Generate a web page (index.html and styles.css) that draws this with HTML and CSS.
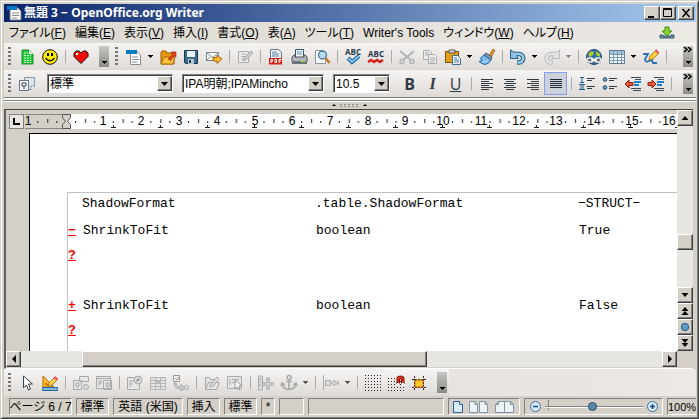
FILE: index.html
```html
<!DOCTYPE html>
<html lang="ja">
<head>
<meta charset="utf-8">
<title>無題 3 - OpenOffice.org Writer</title>
<link rel="stylesheet" href="styles.css">
</head>
<body>
<svg class="defs" aria-hidden="true">
  <defs>
    <symbol id="down" viewBox="0 0 5 3"><path d="M0 0h5v1H4v1H3v1H2V2H1V1H0z"/></symbol>
    <symbol id="chev" viewBox="0 0 10 6"><path d="M1 0l3 2.500L1 5M5 0l3 2.500L5 5" fill="none" stroke="#000" stroke-width="1.500"/></symbol>
    <pattern id="ticks" x="66" width="37.700" height="15" patternUnits="userSpaceOnUse"><path d="M9 7h1v2H9zM19 5h1v4h-1zM28 7h1v2h-1z" fill="#222"/></pattern>
    <pattern id="tabs" x="90" width="47" height="15" patternUnits="userSpaceOnUse"><path d="M21 13.500h5M23.500 11v3" stroke="#222"/></pattern>
    <pattern id="dots" width="3" height="3" patternUnits="userSpaceOnUse"><rect width="1" height="1" fill="#24262c"/></pattern>
  </defs>
</svg>
<div class="window">
  <header class="title">
    <svg class="i" viewBox="0 0 16 16"><path d="M4 3h8l3 3v9H4z" fill="#fff" stroke="#777"/><path d="M1 1h10v4H1z" fill="#0879c1"/><path d="M6 8h7M6 10.500h7M6 13h5" stroke="#888"/></svg>
    <h1>無題 3 − OpenOffice.org Writer</h1>
    <div class="winbtns">
      <button class="raised" aria-label="最小化"><svg viewBox="0 0 12 10"><path d="M2 8h6v2H2z"/></svg></button>
      <button class="raised" aria-label="最大化"><svg viewBox="0 0 12 10"><path d="M1.500.5h8v8h-8zM1 1.500h9" fill="none" stroke="#000"/></svg></button>
      <button class="raised close" aria-label="閉じる"><svg viewBox="0 0 12 10"><path d="M2.500 1l7 8M9.500 1l-7 8" stroke="#000" stroke-width="1.600"/></svg></button>
    </div>
  </header>

  <nav class="menu">
    <a href="#">ファイル(<u>F</u>)</a><a href="#">編集(<u>E</u>)</a><a href="#">表示(<u>V</u>)</a><a href="#">挿入(<u>I</u>)</a><a href="#">書式(<u>O</u>)</a><a href="#">表(<u>A</u>)</a><a href="#">ツール(<u>T</u>)</a><a href="#">Writer's Tools</a><a href="#">ウィンドウ(<u>W</u>)</a><a href="#">ヘルプ(<u>H</u>)</a>
    <button class="update" aria-label="更新"><svg class="i" viewBox="0 0 16 16"><path d="M1 10v3h14v-3h-3v1H4v-1z" fill="#6c8a9c" stroke="#385d74"/><path d="M6 2h4v4h3l-5 5-5-5h3z" fill="#8bd52c" stroke="#3c8a10"/></svg></button>
  </nav>

  <div class="toolbar" role="toolbar" aria-label="標準">
    <span class="grip"></span>
    <button aria-label="表計算"><svg class="i" viewBox="0 0 16 16"><path d="M3 1h7l4 4v10H3z" fill="#25c93d" stroke="#168c27"/><path d="M5 4h4M5 6.500h7M5 9h7M5 11.500h7M5 13.500h7" stroke="#d8ffdc" stroke-dasharray="2 1"/><path d="M10 1v4h4z" fill="#fff"/></svg></button>
    <button aria-label="スマイル"><svg class="i" viewBox="0 0 16 16"><circle cx="8" cy="8" r="7.300" fill="#ffef00" stroke="#111"/><path d="M5 4h2v3H5zM9 4h2v3H9z"/><path d="M3.500 9q4.500 5.500 9 0" fill="none" stroke="#111" stroke-width="1.300"/></svg></button>
    <i class="sep"></i>
    <button aria-label="お気に入り"><svg class="i" viewBox="0 0 16 16"><path d="M8 14.500L1 7.500V4l2-2h3l2 2 2-2h3l2 2v3.500z" fill="#f50a0a" stroke="#111"/><path d="M3 4h2v2H3z" fill="#fff"/></svg></button>
    <button class="more" aria-label="その他"><svg class="arr"><use href="#down"/></svg></button>
    <span class="grip"></span>
    <button aria-label="新規"><svg class="i" viewBox="0 0 16 16"><path d="M4.500 3h7l3 3v9.500h-10z" fill="#fff" stroke="#8a8a8a"/><path d="M0 1h11v4H0z" fill="#0879c1"/><path d="M6 8h6M6 10.500h7M6 13h5" stroke="#888"/></svg></button>
    <button class="drop" aria-label="新規メニュー"><svg class="arr"><use href="#down"/></svg></button>
    <button aria-label="開く"><svg class="i" viewBox="0 0 16 16"><path d="M1 15V4l1-2h4l1 2h7v11z" fill="#e8960c" stroke="#9a5b06"/><path d="M1 15l3-7h11l-2 7z" fill="#ffc53a" stroke="#a9690b"/><path d="M8 10l5-5-2-2h5v5l-1.500-1.500-4 5z" fill="#e64520" stroke="#8c1c0a" stroke-width=".6"/></svg></button>
    <button aria-label="保存"><svg class="i" viewBox="0 0 16 16"><path d="M1.500 1.500h13v13h-12l-1-1z" fill="#3c6a8a" stroke="#173a55"/><path d="M4 2h8v6H4z" fill="#e9f2fa"/><path d="M5 10h6v5H5z" fill="#b4c8d8"/><path d="M6 11h2v3H6z" fill="#234"/></svg></button>
    <button aria-label="メール"><svg class="i" viewBox="0 0 16 16"><path d="M.5 3.500h12v8H.5z" fill="#f4f6f8" stroke="#7c8a96"/><path d="M.5 3.500l6 5 6-5M.5 11.500l4-4M12.500 11.500l-4-4" fill="none" stroke="#8c9aa6"/><path d="M7 8.500h4V6l5 4-5 4.500V12H7z" fill="#fb3" stroke="#a86408"/></svg></button>
    <i class="sep"></i>
    <button class="off" disabled aria-label="編集"><svg class="i" viewBox="0 0 16 16"><path d="M1.500 2.500h10v11h-10zM4 5h5M4 7.500h5M4 10h2" fill="#eee" stroke="#aaa"/><path d="M6 12l1-3 7-7 2 2-7 7z" fill="#ccc" stroke="#aaa"/></svg></button>
    <i class="sep"></i>
    <button aria-label="PDF"><svg class="i" viewBox="0 0 16 16"><path d="M2.500.5h8l3 3v11h-11z" fill="#f2f5f8" stroke="#678"/><path d="M4 3h5M4 5h7M4 7h7" stroke="#58a"/><path d="M1 9h13v6.500H1z" fill="#d81f14"/><path d="M3 14v-3.500h1.500v2H3M7 10.500v3h1.500v-3zM11 14v-3.500h2.500M11 12h2" fill="none" stroke="#fff"/></svg></button>
    <button aria-label="印刷"><svg class="i" viewBox="0 0 16 16"><path d="M4.500.5h8v8h-8z" fill="#eef4fa" stroke="#357"/><path d="M6 3h5M6 5h5" stroke="#69a"/><path d="M1 8l2-2h1v2h9V6h1l2 2v5H1z" fill="#b3b9bf" stroke="#555"/><path d="M1 12h15v3H1z" fill="#6c7278"/><path d="M10 12h4v1h-4z" fill="#8e2"/></svg></button>
    <button aria-label="プレビュー"><svg class="i" viewBox="0 0 16 16"><path d="M1.500 1.500h7l3 3v10h-10z" fill="#f8f8f8" stroke="#8a949c"/><circle cx="8.500" cy="6" r="4" fill="#b7dbf5" stroke="#4c7692" stroke-width="1.300"/><path d="M11.500 9l4 5" stroke="#c47a28" stroke-width="2.500"/></svg></button>
    <i class="sep"></i>
    <button aria-label="スペルチェック"><svg class="i" viewBox="0 0 16 16"><text x="8" y="6" class="abc">ABC</text><path d="M3 9l4 4 7-6" fill="none" stroke="#1a5a98" stroke-width="4"/><path d="M3 9l4 4 7-6" fill="none" stroke="#7fc8f5" stroke-width="2"/></svg></button>
    <button aria-label="自動スペルチェック"><svg class="i" viewBox="0 0 16 16"><text x="8" y="8" class="abc">ABC</text><path d="M0 13l3-2 3 2 3-2 3 2 3-2" fill="none" stroke="#d3211a" stroke-width="2.500"/></svg></button>
    <i class="sep"></i>
    <button class="off" disabled aria-label="切り取り"><svg class="i" viewBox="0 0 16 16"><path d="M1 2l11 9M15 2L4 11" stroke="#b4b4b4" stroke-width="2"/><circle cx="3" cy="12.500" r="2" fill="none" stroke="#b4b4b4" stroke-width="1.500"/><circle cx="13" cy="12.500" r="2" fill="none" stroke="#b4b4b4" stroke-width="1.500"/></svg></button>
    <button class="off" disabled aria-label="コピー"><svg class="i" viewBox="0 0 16 16"><path d="M1.500 1.500h6l2 2v7h-8zM3 4h4M3 6h4" fill="#eee" stroke="#aaa"/><path d="M6.500 5.500h6l2 2v7h-8zM8 9h5M8 11h5M8 13h4" fill="#eee" stroke="#aaa"/></svg></button>
    <button aria-label="貼り付け"><svg class="i" viewBox="0 0 16 16"><path d="M.5 2.500h13v11H.5z" fill="#e3a01c" stroke="#7b4d0a"/><path d="M4 1h6v3H4z" fill="#d8d8c8" stroke="#555"/><path d="M7.500 6.500h5l3 3v6h-8z" fill="#f0f5fa" stroke="#456d8c"/><path d="M9 9h3M9 11h5M9 13h5" stroke="#4a82ac"/></svg></button>
    <button class="drop" aria-label="貼り付けメニュー"><svg class="arr"><use href="#down"/></svg></button>
    <button aria-label="書式のコピー"><svg class="i" viewBox="0 0 16 16"><path d="M10.500 6l3.500-6 2 1.500-3.500 6z" fill="#e89a28" stroke="#935408" stroke-width=".7"/><path d="M7 4l6 4-1 3-7-5z" fill="#8b9aa6" stroke="#456"/><path d="M5 6l7 5q-2 4-6 4.500-3-.5-6-3l3.500-1-2.500-2z" fill="#79b8ec" stroke="#2669a8"/><path d="M5 11l-1 3M8 11l-1 3" stroke="#d5edff"/></svg></button>
    <i class="sep"></i>
    <button aria-label="元に戻す"><svg class="i" viewBox="0 0 16 16"><path d="M4 5h5a4.200 4.200 0 010 8.500H7" fill="none" stroke="#245b82" stroke-width="4.500"/><path d="M.5 1v8.500h8L6.500 7V3.500L3.500 3z" fill="#8fc0df" stroke="#245b82"/><path d="M4 5h5a4.200 4.200 0 010 8.500H7.500" fill="none" stroke="#9bcbe8" stroke-width="2.500"/></svg></button>
    <button class="drop" aria-label="元に戻すメニュー"><svg class="arr"><use href="#down"/></svg></button>
    <button class="off" disabled aria-label="やり直し"><svg class="i" viewBox="0 0 16 16"><path d="M12 5H7a4.200 4.200 0 000 8.500h2" fill="none" stroke="#b8b8b8" stroke-width="4.500"/><path d="M15.500 1v8.500h-8L9.500 7V3.500l3-.5z" fill="#e4e2e0" stroke="#b8b8b8"/><path d="M12 5H7a4.200 4.200 0 000 8.500h1.500" fill="none" stroke="#e6e4e2" stroke-width="2.500"/></svg></button>
    <button class="drop off" disabled aria-label="やり直しメニュー"><svg class="arr"><use href="#down"/></svg></button>
    <i class="sep"></i>
    <button aria-label="ハイパーリンク"><svg class="i" viewBox="0 0 16 16"><circle cx="8" cy="8" r="7.500" fill="#2f6aa0" stroke="#234b70"/><path d="M2 5l3-3 3 1-1 3-3 2zM10 2l4 3v3l-4-2z" fill="#a9ce32"/><path d="M1 9h14v5H1z" fill="#607078"/><rect x="1" y="9" width="6" height="4" rx="2" fill="none" stroke="#eee" stroke-width="1.500"/><rect x="9" y="9" width="6" height="4" rx="2" fill="none" stroke="#eee" stroke-width="1.500"/><path d="M5 11h6" stroke="#fff" stroke-width="1.500"/></svg></button>
    <button aria-label="表"><svg class="i" viewBox="0 0 16 16"><path d="M.5 1.500h15v13H.5z" fill="#f4f9fd" stroke="#5d7c96"/><path d="M1 2h14v3H1z" fill="#a7c5dc"/><path d="M.5 5.500h15M.5 8.500h15M.5 11.500h15M4.500 2v12M8.500 2v12M12.500 2v12" stroke="#7c98ae"/></svg></button>
    <button class="drop" aria-label="表メニュー"><svg class="arr"><use href="#down"/></svg></button>
    <button aria-label="図形描画"><svg class="i" viewBox="0 0 16 16"><path d="M0 5h5l-3 5q0 4 4 2l3-1 1 3h4" fill="none" stroke="#2b6fb8" stroke-width="1.800"/><path d="M6 11l1-4 6-6 3 3-6 6z" fill="#ffcf42" stroke="#9b680c" stroke-width=".8"/><path d="M12 2l1-2 3 3-1 2z" fill="#e5526c"/></svg></button>
    <i class="sep"></i>
    <button class="more last" aria-label="その他"><svg class="chev"><use href="#chev"/></svg><svg class="arr"><use href="#down"/></svg></button>
  </div>

  <div class="toolbar" role="toolbar" aria-label="書式設定">
    <span class="grip"></span>
    <button aria-label="スタイル"><svg class="i" viewBox="0 0 16 16"><path d="M5.500 1.500h10v9l-3 3h-7z" fill="#dfe7ee" stroke="#8496a6"/><path d="M12 14v-4h4" fill="#fff" stroke="#8496a6"/><path d="M.5 4.500h9v10h-9z" fill="#f2f4f6" stroke="#667686"/><path d="M3 7h4v3H3zM5 10v3" fill="none" stroke="#445"/></svg></button>
    <label class="combo style"><select aria-label="段落スタイル"><option>標準</option></select><span class="raised"><svg viewBox="0 0 7 4"><path d="M0 0h7L3.500 4z"/></svg></span></label>
    <label class="combo font"><select aria-label="フォント名"><option>IPA明朝;IPAMincho</option></select><span class="raised"><svg viewBox="0 0 7 4"><path d="M0 0h7L3.500 4z"/></svg></span></label>
    <label class="combo size"><select aria-label="フォントサイズ"><option>10.5</option></select><span class="raised"><svg viewBox="0 0 7 4"><path d="M0 0h7L3.500 4z"/></svg></span></label>
    <button class="b" aria-label="太字">B</button>
    <button class="b it" aria-label="斜体">I</button>
    <button class="b un" aria-label="下線">U</button>
    <i class="sep"></i>
    <button aria-label="左揃え"><svg class="i" viewBox="0 0 16 16"><path d="M2 3.500h12M2 5.500h8M2 7.500h12M2 9.500h8M2 11.500h12M2 13.500h8" stroke="#333b45"/></svg></button>
    <button aria-label="中央揃え"><svg class="i" viewBox="0 0 16 16"><path d="M2 3.500h12M4 5.500h8M2 7.500h12M4 9.500h8M2 11.500h12M4 13.500h8" stroke="#333b45"/></svg></button>
    <button aria-label="右揃え"><svg class="i" viewBox="0 0 16 16"><path d="M2 3.500h12M6 5.500h8M2 7.500h12M6 9.500h8M2 11.500h12M6 13.500h8" stroke="#333b45"/></svg></button>
    <button class="on" aria-pressed="true" aria-label="両端揃え"><svg class="i" viewBox="0 0 16 16"><path d="M2 3.500h12M2 5.500h12M2 7.500h12M2 9.500h12M2 11.500h12" stroke="#222a35"/></svg></button>
    <i class="sep"></i>
    <button aria-label="番号付け"><svg class="i" viewBox="0 0 16 16"><path d="M1 1.500h4M3 2v4M1 6.500h4M0 8.500h6M2 9v4M4 9v4M0 13.500h6" stroke="#1c6390"/><path d="M8 2.500h8M8 4.500h5M8 10.500h8M8 12.500h5" stroke="#333b45"/></svg></button>
    <button aria-label="箇条書き"><svg class="i" viewBox="0 0 16 16"><circle cx="3" cy="3.500" r="1.800" fill="#6ba8d0" stroke="#134468"/><circle cx="3" cy="11.500" r="1.800" fill="#6ba8d0" stroke="#134468"/><path d="M7 2.500h8M7 4.500h5M7 10.500h8M7 12.500h5" stroke="#333b45"/></svg></button>
    <button aria-label="インデント減"><svg class="i" viewBox="0 0 16 16"><path d="M6 1.500h10M10 3.500h6M6 12.500h10M8 14.500h8" stroke="#3b4650"/><path d="M9 5h7v2H9zM9 8h5v2H9z" fill="#1487cc"/><path d="M0 8l4-4v2.500h4v3H4V12z" fill="#ea593c" stroke="#8e210e"/></svg></button>
    <button aria-label="インデント増"><svg class="i" viewBox="0 0 16 16"><path d="M6 1.500h10M10 3.500h6M6 12.500h10M8 14.500h8" stroke="#3b4650"/><path d="M9 5h7v2H9zM9 8h5v2H9z" fill="#1487cc"/><path d="M8 8L4 4v2.500H0v3h4V12z" fill="#ea593c" stroke="#8e210e"/></svg></button>
    <i class="sep"></i>
    <button class="more last" aria-label="その他"><svg class="chev"><use href="#chev"/></svg><svg class="arr"><use href="#down"/></svg></button>
  </div>

  <div class="splitter"><svg viewBox="0 0 36 4"><path d="M0 3h4L2 1zM31 3h4l-2-2z"/><path d="M8 1.500h20M8 3.500h20" stroke="#888" stroke-dasharray="2 2"/></svg></div>

  <main class="work">
    <div class="ruler">
      <button class="tabkind" aria-label="タブの種類"><svg viewBox="0 0 8 8"><path d="M0 0h2v5h5v2H0z"/></svg></button>
      <svg class="scale" height="15">
        <g class="shift">
          <rect x="66" width="2000" height="15" fill="#fff"/>
          <path d="M25 .5h41M25 14.500h41" stroke="#888"/>
          <rect x="36" width="28" height="15" fill="url(#ticks)"/>
          <rect x="66" width="2000" height="15" fill="url(#ticks)"/>
          <rect x="90" width="2000" height="15" fill="url(#tabs)"/>
          <g class="nums">
            <text x="28" y="11">1</text><text x="103" y="11">1</text><text x="141" y="11">2</text><text x="179" y="11">3</text><text x="217" y="11">4</text><text x="255" y="11">5</text><text x="292" y="11">6</text><text x="330" y="11">7</text><text x="368" y="11">8</text><text x="405" y="11">9</text><text x="443" y="11">10</text><text x="481" y="11">11</text><text x="519" y="11">12</text><text x="556" y="11">13</text><text x="594" y="11">14</text><text x="632" y="11">15</text><text x="669" y="11">16</text>
          </g>
          <path d="M62.500.5h8v3l-3 4 3 3v4h-8v-4l3-3-3-4z" fill="#d4d0c8" stroke="#555"/>
        </g>
      </svg>
    </div>
    <div class="canvas">
      <article class="page">
        <div class="sheet">
        <table>
          <colgroup><col class="c0"><col class="c1"><col class="c2"><col></colgroup>
          <tbody>
            <tr class="head"><td></td><td>ShadowFormat</td><td>.table.ShadowFormat</td><td>−STRUCT−</td></tr>
            <tr><td><a href="#">−</a></td><td>ShrinkToFit</td><td>boolean</td><td>True</td></tr>
            <tr><td><a href="#">?</a></td><td></td><td></td><td></td></tr>
            <tr><td></td><td></td><td></td><td></td></tr>
            <tr><td><a href="#">+</a></td><td>ShrinkToFit</td><td>boolean</td><td>False</td></tr>
            <tr><td><a href="#">?</a></td><td></td><td></td><td></td></tr>
          </tbody>
        </table>
        </div>
      </article>
    </div>
    <div class="vscroll">
      <button class="raised" aria-label="上へ"><svg viewBox="0 0 8 8"><path d="M.5 6h7L4 2z"/></svg></button>
      <span class="above"></span><span class="raised thumb"></span><span class="below"></span>
      <button class="raised" aria-label="下へ"><svg viewBox="0 0 8 8"><path d="M.5 2h7L4 6z"/></svg></button>
      <button class="raised" aria-label="前のページ"><svg viewBox="0 0 8 8"><path d="M.5 4h7L4 0zM.5 8h7L4 4z"/></svg></button>
      <button class="raised" aria-label="ナビゲーション"><svg viewBox="0 0 8 8"><circle cx="4" cy="4" r="3.700" fill="#5a9acb" stroke="#315a7c"/></svg></button>
      <button class="raised" aria-label="次のページ"><svg viewBox="0 0 8 8"><path d="M.5 0h7L4 4zM.5 4h7L4 8z"/></svg></button>
    </div>
    <div class="hscroll">
      <button class="raised" aria-label="左へ"><svg viewBox="0 0 8 8"><path d="M6 0v8L2 4z"/></svg></button>
      <span class="before"></span><span class="raised thumb"></span><span class="after"></span>
      <button class="raised" aria-label="右へ"><svg viewBox="0 0 8 8"><path d="M2 0v8l4-4z"/></svg></button>
    </div>
    <span class="corner"></span>
  </main>

  <div class="toolbar forms" role="toolbar" aria-label="フォームデザイン">
    <span class="grip"></span>
    <button aria-label="選択"><svg class="i" viewBox="0 0 16 16"><path d="M4.500 1v12l3-3 2 5 2-1-2-5h4z" fill="#fff" stroke="#344452"/></svg></button>
    <button aria-label="デザインモード"><svg class="i" viewBox="0 0 16 16"><path d="M1 1l11 11H1zM4 8v2h2z" fill="#ffbd23" stroke="#b96a08" fill-rule="evenodd"/><path d="M.5 12.500h15v3H.5z" fill="#7db9e8" stroke="#2c6696"/><path d="M6 11l1-3 6-6 3 2-7 7z" fill="#ffcf42" stroke="#8e5b10" stroke-width=".7"/><path d="M11 3l2-2 3 3-2 1z" fill="#e85a68"/></svg></button>
    <i class="sep"></i>
    <button class="off" disabled aria-label="コントロール"><svg class="i" viewBox="0 0 16 16"><path d="M6.500 1.500h9v5h-9zM.5 5.500h8v9h-8zM3 8h3v3H3zM4.500 11v2" fill="#e6e6e6" stroke="#aaa"/><circle cx="13" cy="12" r="2.500" fill="#ddd" stroke="#aaa"/></svg></button>
    <button class="off" disabled aria-label="フォーム"><svg class="i" viewBox="0 0 16 16"><path d="M.5 1.500h14v12H.5zM1 3.500h13M3 6h3M3 6v5M3 8h3M7.500 5.500h8v9h-8zM10 8h3v3h-3zM11.500 11v2" fill="#e6e6e6" stroke="#aaa"/></svg></button>
    <i class="sep"></i>
    <button class="off" disabled aria-label="フォームナビゲータ"><svg class="i" viewBox="0 0 16 16"><path d="M.5 2.500h12v12H.5zM3 6h4M3 6v6M3 9h3" fill="#e6e6e6" stroke="#aaa"/><circle cx="11" cy="5" r="4" fill="#ddd" stroke="#aaa"/><path d="M13 3l-3 1-1 3 3-1z" fill="#999"/></svg></button>
    <button class="off" disabled aria-label="テーブル"><svg class="i" viewBox="0 0 16 16"><path d="M.5 2.500h15v12H.5zM.5 5.500h15M.5 8.500h15M.5 11.500h15M5.500 3v11M10.500 3v11" fill="#e6e6e6" stroke="#b4b4b4"/><path d="M6 6h5v2H6z" fill="#bbb"/></svg></button>
    <button class="off" disabled aria-label="タブ順序"><svg class="i" viewBox="0 0 16 16"><path d="M.5.5h6v6h-6zM2 3l2 2 3-4" fill="#eee" stroke="#999"/><path d="M3 8q0 4 5 4v-3l4 4-4 3v-2Q1 14 1 8z" fill="#ccc" stroke="#aaa"/><circle cx="13.500" cy="12.500" r="2" fill="#ddd" stroke="#aaa"/></svg></button>
    <i class="sep"></i>
    <button class="off" disabled aria-label="デザインで開く"><svg class="i" viewBox="0 0 16 16"><path d="M1.500 14.500v-12h4l1 2h6v3M1.500 14.500l3-7h11l-3 7z" fill="#e2e2e2" stroke="#aaa"/><path d="M6 12l1-3 6-7 2 2-6 7z" fill="#ddd" stroke="#aaa"/></svg></button>
    <button class="off" disabled aria-label="自動フォーカス"><svg class="i" viewBox="0 0 16 16"><path d="M.5 1.500h14v12H.5zM3 4v6M5 4.500h7M5 7.500h3" fill="#e6e6e6" stroke="#aaa"/><path d="M8 5v9l2-2 2 3 1-1-1-3h3z" fill="#f4f4f4" stroke="#999"/></svg></button>
    <i class="sep"></i>
    <button class="off" disabled aria-label="位置とサイズ"><svg class="i" viewBox="0 0 16 16"><path d="M.5 1v14h4V1zM1 4h2M1 7h2M1 10h2" fill="#ddd" stroke="#aaa"/><path d="M10 2l2 2.500h-1V8h3V7l2 2-2 2v-1h-3v3h1l-2 2-2-2h1v-3H6v1L4 9l2-2v1h3V4.500H8z" fill="#ddd" stroke="#999" stroke-width=".8"/></svg></button>
    <button class="off" disabled aria-label="アンカー"><svg class="i" viewBox="0 0 16 16"><circle cx="8" cy="2.500" r="2" fill="none" stroke="#aaa" stroke-width="1.500"/><path d="M8 4v11M5 6.500h6M1 9q1 5 7 5.500 6-.5 7-5.500M0 11l1-3 3 2M16 11l-1-3-3 2" fill="none" stroke="#aaa" stroke-width="1.600"/></svg></button>
    <button class="drop off dark" disabled aria-label="アンカーメニュー"><svg class="arr"><use href="#down"/></svg></button>
    <i class="sep"></i>
    <button class="off" disabled aria-label="配置"><svg class="i" viewBox="0 0 16 16"><path d="M.5 0v15M2.500 5.500h5v5h-5z" fill="#ddd" stroke="#aaa"/><path d="M8.500 8l3-3v2h4v2h-4v2z" fill="#ddd" stroke="#aaa"/></svg></button>
    <button class="drop off dark" disabled aria-label="配置メニュー"><svg class="arr"><use href="#down"/></svg></button>
    <i class="sep"></i>
    <button aria-label="グリッド表示"><svg class="i" viewBox="0 0 16 16"><rect width="16" height="16" fill="url(#dots)"/></svg></button>
    <button aria-label="グリッドに吸着"><svg class="i" viewBox="0 0 16 16"><rect y="3" width="16" height="13" fill="url(#dots)"/><path d="M9 9V3q0-2 3.500-2T16 3v6h-2.500V4h-2v5z" fill="#e7301c" stroke="#791208"/><path d="M9 8h2.500v2H9zM13.500 8H16v2h-2.500z" fill="#fff"/></svg></button>
    <button aria-label="ガイド"><svg class="i" viewBox="0 0 16 16"><path d="M1 4.500h14M1 12.500h14M3.500 1v15M12.500 1v15" stroke="#222" stroke-dasharray="2 1"/><path d="M4 5h8v7H4z" fill="#ffc928" stroke="#c15b0c"/></svg></button>
    <button class="more" aria-label="その他"><svg class="arr"><use href="#down"/></svg></button>
  </div>

  <footer class="status">
    <span class="s-page">ページ 6 / 7</span><span class="s-w">標準</span><span class="s-lang">英語 (米国)</span><span class="s-w">挿入</span><span class="s-w">標準</span><span class="s-mod">*</span><span class="s-sig"></span><span class="s-free"></span>
    <span class="s-view">
      <button aria-label="単一ページ"><svg viewBox="0 0 10 12"><path d="M.5.5h6l3 3v8h-9z" fill="#d9ebfc" stroke="#28609c"/><path d="M6.500.5v3h3" fill="#fff" stroke="#28609c"/></svg></button>
      <button aria-label="複数ページ"><svg class="wide" viewBox="0 0 20 12"><path d="M.5.500h6l2 3v8h-8zM10.500.500h6l2 3v8h-8zM6 .5v3h2.500M16 .5v3h2.500" fill="#eef3f8" stroke="#8495a6"/></svg></button>
      <button aria-label="見開き"><svg class="wide" viewBox="0 0 20 12"><path d="M9.500.5h-6l-3 3v8h9zM9.500.5h6l3 3v8h-9zM3.500.5v3h-3M15.500.5v3h3" fill="#eef3f8" stroke="#8495a6"/></svg></button>
    </span>
    <span class="s-zoom">
      <button aria-label="縮小"><svg viewBox="0 0 11 11"><circle cx="5.500" cy="5.500" r="5" fill="#d8eafa" stroke="#3e6f9c"/><path d="M3 5.500h5" stroke="#124d86" stroke-width="1.500"/></svg></button>
      <input type="range" min="0" max="100" value="49" aria-label="ズーム">
      <button aria-label="拡大"><svg viewBox="0 0 11 11"><circle cx="5.500" cy="5.500" r="5" fill="#d8eafa" stroke="#3e6f9c"/><path d="M3 5.500h5M5.500 3v5" stroke="#124d86" stroke-width="1.500"/></svg></button>
    </span>
    <span class="s-pct">100%</span>
  </footer>
</div>
</body>
</html>
```
FILE: styles.css
```css
* { box-sizing: border-box; }
body {
  margin: 0;
  background: #d4d0c8;
  color: #000;
  font: 12px/16px "Liberation Sans", "Noto Sans CJK JP", sans-serif;
  font-feature-settings: "palt";
}
svg { display: block; }
.defs { position: absolute; width: 0; height: 0; }
button { padding: 0; border: 0; background: none; color: inherit; font: inherit; }
a { color: inherit; text-decoration: none; }

.window {
  display: flex;
  flex-direction: column;
  height: 100vh;
  padding: 2px;
  border: 1px solid #d4d0c8;
  border-right-color: #404040;
  border-bottom-color: #404040;
  box-shadow: inset 1px 1px #fff, inset -1px -1px #808080;
  overflow: hidden;
}
.window > * { flex: none; margin-left: 1px; }

.raised {
  display: flex;
  align-items: center;
  justify-content: center;
  background: #d4d0c8;
  border: 1px solid #fff;
  border-right-color: #404040;
  border-bottom-color: #404040;
  box-shadow: inset -1px -1px #808080;
}

.title {
  display: flex;
  align-items: center;
  height: 18px;
  margin-top: 1px;
  padding: 0 2px;
  background: linear-gradient(90deg, #0a246a, #a6caf0);
  color: #fff;
}
.i { width: 16px; height: 16px; overflow: visible; }
.title h1 { flex: 1; margin: 0 0 0 2px; font: bold 12px/16px "Noto Sans", "Noto Sans CJK JP", sans-serif; white-space: nowrap; }
.winbtns { display: flex; }
.winbtns button { width: 16px; height: 14px; }
.winbtns .close { margin-left: 2px; }
.winbtns svg { width: 12px; height: 10px; }

.menu {
  display: flex;
  align-items: center;
  height: 21px;
  padding: 0 21px 0 5px;
  gap: 9px;
  background: linear-gradient(90deg, #dcd9d1, #ece8e4);
  white-space: nowrap;
}
.update { margin-left: auto; }

.toolbar {
  display: flex;
  align-items: center;
  height: 27px;
  padding-left: 4px;
  background: linear-gradient(#f6f4f3, #dedad6);
}
.toolbar > * { flex: none; }
.grip { width: 3px; height: 19px; margin-right: 4px; background: repeating-linear-gradient(#777 0 2px, transparent 2px 4px); }
.toolbar button { display: flex; align-items: center; justify-content: center; width: 23px; height: 23px; }
.toolbar .drop { width: 11px; }
.arr { width: 5px; height: 3px; }
.off .arr { fill: #888; }
.off.dark .arr { fill: #555; }
.sep { width: 8px; height: 13px; background: linear-gradient(#aaa, #aaa) center / 1px 100% no-repeat; }
.toolbar .more {
  flex-direction: column;
  justify-content: flex-end;
  width: 10px;
  height: 21px;
  margin: 0 6px 0 7px;
  padding-bottom: 3px;
  background: linear-gradient(#c8c6c3, #8c8a88);
}
.toolbar .last { justify-content: space-between; margin: 0 3px 0 auto; padding-top: 1px; }
.chev { width: 10px; height: 6px; }
.abc { font: bold 8px "Open Sans", sans-serif; fill: #25394c; text-anchor: middle; }

.combo { display: grid; height: 19px; margin-left: 9px; align-items: center; background: #fff; border: 1px solid #808080; border-right-color: #fff; border-bottom-color: #fff; box-shadow: inset 1px 1px #404040; }
.combo > * { grid-area: 1 / 1; }
.combo select { width: 100%; height: 17px; padding: 0 18px 0 2px; border: 0; appearance: none; background: none; color: #000; font: 12px/16px "Liberation Sans", "Noto Sans CJK JP", sans-serif; }
.combo .raised { justify-self: end; width: 15px; height: 15px; pointer-events: none; }
.combo svg { width: 7px; height: 4px; }
.style { width: 126px; }
.font { width: 142px; }
.size { width: 57px; margin-right: 8px; }
.toolbar .b { color: #333b48; font: bold 16px/18px "Open Sans", sans-serif; }
.toolbar .it { font: italic bold 16px/18px "Liberation Serif", serif; }
.toolbar .un { font-weight: 400; text-decoration: underline; }
.toolbar .on { border: 1px solid #84a0e8; background: #cdd1dc; }

.splitter {
  display: flex;
  justify-content: center;
  height: 12px;
  padding-top: 5px;
  border-top: 1px solid #808080;
  background: linear-gradient(#fff 0 2px, #808080 2px 3px, #fff 3px 4px, #d4d0c8 4px);
}
.splitter svg { width: 36px; height: 4px; }

.window > .work {
  flex: 1;
  min-height: 0;
  display: grid;
  grid-template: 23px 1fr 17px / 1fr 16px;
  margin-right: 3px;
  border-left: 2px solid #606060;
  border-top: 1px solid #404040;
  border-bottom: 1px solid #fff;
}
.ruler { display: flex; min-width: 0; padding: 4px 0 0 3px; overflow: hidden; }
.tabkind { flex: none; display: grid; place-items: center; width: 15px; height: 15px; border: 1px solid #fff; outline: 1px solid #808080; outline-offset: -1px; background: #e8e6e1; }
.tabkind svg { width: 8px; height: 8px; }
.scale { flex: 1; min-width: 0; }
.shift { transform: translateX(-24px); }
.nums { font-size: 12px; text-anchor: middle; }
.canvas { grid-row: 2; min-width: 0; overflow: hidden; padding-left: 23px; }
.page { height: 100%; padding: 58px 0 0 37px; background: #fff; border: 1px solid #000; border-width: 1px 0 0 1px; overflow: hidden; }
.sheet { height: 100%; border: 1px solid #c0c0c0; border-width: 1px 0 0 1px; }
table {
  width: 100%;
  table-layout: fixed;
  border-spacing: 0;
  font: 13px/16px "Liberation Mono", monospace;
}
td { height: 25px; padding: 0 0 0 1px; vertical-align: middle; white-space: nowrap; }
td:first-child, .head td { padding: 0; }
.head td { vertical-align: top; line-height: 22px; }
.c0 { width: 14px; }
.c1 { width: 233px; }
.c2 { width: 263px; }
td a { color: #f00; font-weight: bold; text-decoration: underline; }

.vscroll { grid-area: 1 / 2 / 3 / 3; display: flex; flex-direction: column; background: #e8e6e1; }
.vscroll button, .vscroll .thumb { width: 16px; height: 16px; }
.vscroll svg, .hscroll svg { width: 8px; height: 8px; }
.above { flex: 109; }
.below { flex: 37; }
.hscroll { grid-area: 3 / 1; display: flex; height: 16px; background: #e8e6e1; }
.hscroll button { width: 15px; height: 16px; }
.hscroll .thumb { flex: 344; }
.before { flex: 61; }
.after { flex: 235; }
.corner { grid-area: 3 / 2; background: #d4d0c8; }

.forms { background: linear-gradient(#f6f4f3, #dedad6) left / 445px no-repeat, linear-gradient(90deg, #dedad4, #ece8e4); }

.status { display: flex; gap: 4px; height: 20px; padding: 2px 0 1px 5px; white-space: nowrap; }
.status > span { flex: none; display: flex; align-items: center; justify-content: center; height: 17px; border: 1px solid #808080; border-right-color: #fff; border-bottom-color: #fff; }
.s-page { width: 63px; }
.s-w { width: 33px; }
.s-lang { width: 70px; }
.s-mod { width: 14px; }
.s-sig { width: 25px; }
.status .s-free { flex: 1; }
.status .s-view { width: 72px; gap: 6px; }
.s-view svg { width: 10px; height: 12px; }
.s-view .wide { width: 20px; }
.status .s-zoom { width: 139px; gap: 4px; }
.s-zoom svg { width: 11px; height: 11px; }
.status .s-pct { width: 29px; border-right: 0; font-size: 11px; }
.s-zoom input { width: 98px; height: 13px; margin: 0; appearance: none; background: linear-gradient(#808080 0 1px, #fff 1px 2px) center / 100% 2px no-repeat, linear-gradient(#808080, #808080) 3px 0 / 1px 10px no-repeat; }
.s-zoom input::-webkit-slider-thumb { appearance: none; width: 9px; height: 9px; border: 1px solid #244c6c; border-radius: 50%; background: #5688ac; }
```
